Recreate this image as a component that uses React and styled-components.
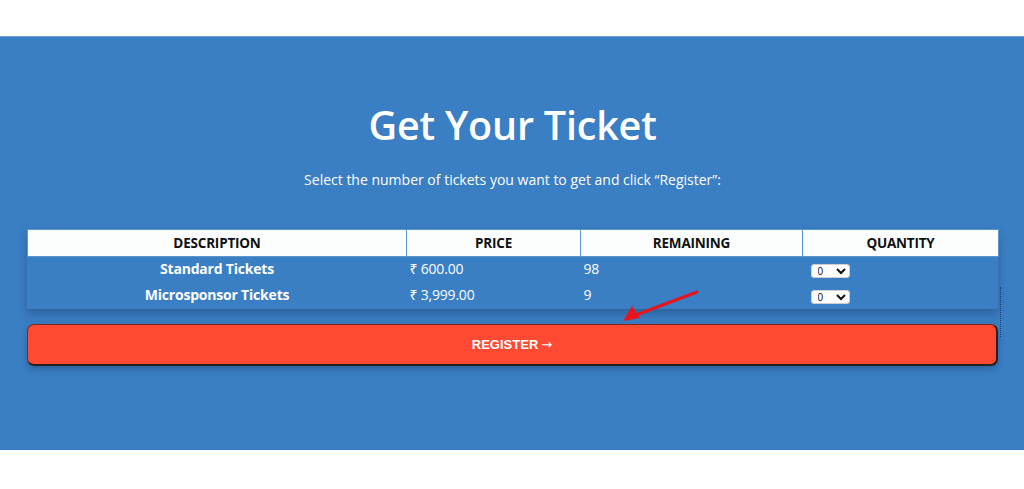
import React from "react";
import styled, { createGlobalStyle } from "styled-components";

const Global = createGlobalStyle`
  html, body { margin: 0; padding: 0; background: #ffffff; }
  body { font-family: "Open Sans", "Noto Sans", sans-serif; }
`;

const Page = styled.div`
  width: 1024px;
  height: 489px;
  padding-top: 36px;
  box-sizing: border-box;
  overflow: hidden;
`;

const Section = styled.section`
  position: relative;
  height: 414px;
  background: #3a7ec3;
  border-top: 1px solid #6fa2d6;
  box-sizing: border-box;
  padding: 62px 26px 0 27px;
  display: flex;
  flex-direction: column;
  align-items: stretch;
`;

const Title = styled.h1`
  margin: 0;
  text-align: center;
  color: #ffffff;
  font-family: "Open Sans", sans-serif;
  font-weight: 600;
  font-size: 39.5px;
  line-height: 52px;
  letter-spacing: -0.2px;
`;

const Subtitle = styled.p`
  margin: 19px 0 0;
  text-align: center;
  color: #ffffff;
  font-size: 14px;
  line-height: 20px;
  letter-spacing: 0;
`;

const TableWrap = styled.div`
  margin-top: 39px;
  box-shadow: 0 5px 8px rgba(20, 50, 90, 0.35);
`;

const Table = styled.table`
  width: 100%;
  border-collapse: collapse;
  table-layout: fixed;
`;

const Th = styled.th`
  background: #fcfefe;
  color: #111111;
  font-size: 13.5px;
  font-weight: 700;
  height: 26px;
  padding: 0;
  text-align: center;
  border: 1px solid #5b95d2;
  text-transform: uppercase;
  letter-spacing: -0.2px;
`;

const Td = styled.td`
  box-sizing: border-box;
  color: #ffffff;
  font-size: 14px;
  height: 26px;
  line-height: 18px;
  padding: 0 3px 2px;
  text-align: ${(p) => (p.$center ? "center" : "left")};
  font-weight: ${(p) => (p.$bold ? 700 : 400)};
  letter-spacing: -0.2px;
  vertical-align: middle;
`;

const Select = styled.select`
  width: 39px;
  height: 14px;
  font-size: 10px;
  padding: 0 0 0 2px;
  margin-left: 5px;
  margin-top: 4px;
  border: 1px solid #cfcfcf;
  border-radius: 3px;
  background: #ffffff;
  color: #111;
  font-family: "Liberation Sans", sans-serif;
  vertical-align: middle;
`;

const Button = styled.button`
  margin-top: 15px;
  height: 42px;
  width: 100%;
  background: #ff4a33;
  color: #ffffff;
  font-family: "Liberation Sans", Arial, sans-serif;
  font-weight: 700;
  font-size: 13px;
  border: 1px solid #7a2a20;
  border-right: 2px solid #222;
  border-bottom: 2px solid #222;
  border-radius: 7px;
  box-shadow: 0 3px 6px rgba(20, 50, 90, 0.35);
  cursor: pointer;
`;

const ArrowGlyph = styled.span`
  font-family: "DejaVu Sans", sans-serif;
  font-weight: 400;
  font-size: 13px;
  margin-left: 3px;
`;

const Dots = styled.div`
  position: absolute;
  left: 1000px;
  top: 250px;
  height: 50px;
  border-left: 1px dotted #1c3d66;
`;

const Arrow = styled.svg`
  position: absolute;
  left: 0;
  top: 0;
  pointer-events: none;
`;

const rows = [
  { name: "Standard Tickets", price: "₹ 600.00", remaining: "98" },
  { name: "Microsponsor Tickets", price: "₹ 3,999.00", remaining: "9" },
];

export default function App() {
  return (
    <Page>
      <Global />
      <Section>
        <Title>Get Your Ticket</Title>
        <Subtitle>Select the number of tickets you want to get and click “Register”:</Subtitle>
        <TableWrap>
          <Table>
            <colgroup>
              <col style={{ width: "379px" }} />
              <col style={{ width: "174px" }} />
              <col style={{ width: "222px" }} />
              <col style={{ width: "196px" }} />
            </colgroup>
            <thead>
              <tr>
                <Th>Description</Th>
                <Th>Price</Th>
                <Th>Remaining</Th>
                <Th>Quantity</Th>
              </tr>
            </thead>
            <tbody>
              {rows.map((r) => (
                <tr key={r.name}>
                  <Td $center $bold>{r.name}</Td>
                  <Td>{r.price}</Td>
                  <Td>{r.remaining}</Td>
                  <Td>
                    <Select defaultValue="0">
                      <option value="0">0</option>
                      <option value="1">1</option>
                      <option value="2">2</option>
                    </Select>
                  </Td>
                </tr>
              ))}
            </tbody>
          </Table>
        </TableWrap>
        <Button>
          REGISTER<ArrowGlyph>→</ArrowGlyph>
        </Button>
        <Dots />
        <Arrow width="1024" height="414" viewBox="0 0 1024 414">
          <line x1="697" y1="255" x2="636" y2="278" stroke="#e8141c" strokeWidth="3" strokeLinecap="round" />
          <polygon points="623,284 632,269 640,281" fill="#e8141c" />
        </Arrow>
      </Section>
    </Page>
  );
}
